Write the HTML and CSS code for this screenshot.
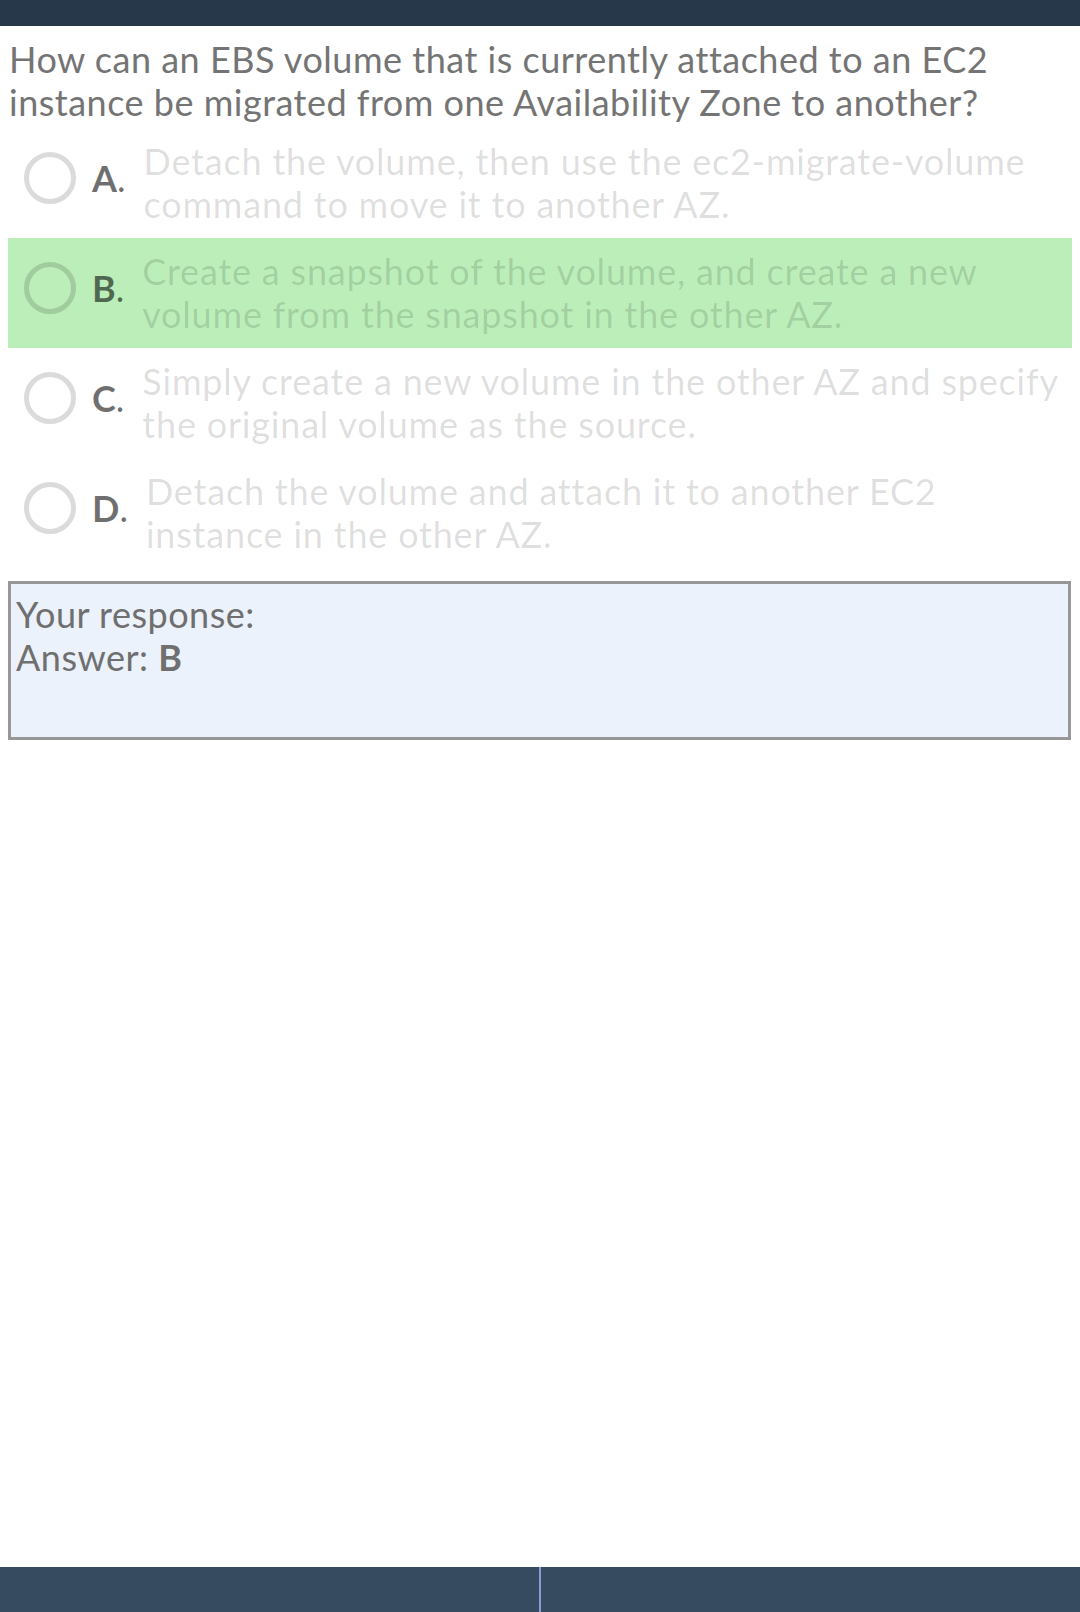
FILE: index.html
```html
<!DOCTYPE html>
<html lang="en">
<head>
<meta charset="utf-8">
<title>Quiz</title>
<link rel="stylesheet" href="styles.css">
</head>
<body>
<div class="page">
  <header class="topbar"></header>
  <main class="content">
    <p class="question">How can an EBS volume that is currently attached to an EC2 instance be migrated from one Availability Zone to another?</p>
    <div class="options">
      <div class="option">
        <div class="marker"><span class="radio"></span><span class="label"><b>A</b>.</span></div>
        <div class="text">Detach the volume, then use the ec2-migrate-volume command to move it to another AZ.</div>
      </div>
      <div class="option correct">
        <div class="marker"><span class="radio"></span><span class="label"><b>B</b>.</span></div>
        <div class="text">Create a snapshot of the volume, and create a new volume from the snapshot in the other AZ.</div>
      </div>
      <div class="option">
        <div class="marker"><span class="radio"></span><span class="label"><b>C</b>.</span></div>
        <div class="text">Simply create a new volume in the other AZ and specify the original volume as the source.</div>
      </div>
      <div class="option">
        <div class="marker"><span class="radio"></span><span class="label"><b>D</b>.</span></div>
        <div class="text">Detach the volume and attach it to another EC2 instance in the other AZ.</div>
      </div>
    </div>
    <div class="response">
      <div>Your response:</div>
      <div>Answer: <b>B</b></div>
    </div>
  </main>
  <footer class="bottombar">
    <div class="half"></div>
    <div class="divider"></div>
    <div class="half"></div>
  </footer>
</div>
</body>
</html>
```
FILE: styles.css
```css
html, body {
  margin: 0;
  padding: 0;
  background: #ffffff;
}
body {
  font-family: Lato, "Noto Sans", sans-serif;
}
.page {
  display: flex;
  flex-direction: column;
  min-height: 100vh;
}
.topbar {
  height: 26px;
  background: #27384a;
  flex: none;
}
.content {
  padding: 12px 8px 0 8px;
  flex: 1;
}
.question {
  margin: 0 0 4px 0;
  padding-left: 1px;
  font-size: 36px;
  font-weight: 400;
  letter-spacing: 0.5px;
  line-height: 43px;
  color: #747474;
}
.options {
  display: flex;
  flex-direction: column;
}
.option {
  display: flex;
  align-items: center;
  padding: 12px 0;
}
.option.correct {
  background: #bbeeb9;
}
.marker {
  display: flex;
  align-items: center;
  margin-bottom: 10px;
  flex: none;
}
.radio {
  width: 52px;
  height: 52px;
  box-sizing: border-box;
  border: 5px solid rgba(0, 0, 0, 0.14);
  border-radius: 50%;
  margin-left: 16px;
}
.label {
  margin-left: 16px;
  font-size: 36px;
  line-height: 43px;
  color: rgba(0, 0, 0, 0.56);
}
.label b {
  font-weight: 700;
}
.text {
  margin-left: 18px;
  font-size: 36px;
  font-weight: 400;
  letter-spacing: 0.8px;
  line-height: 43px;
  color: rgba(0, 0, 0, 0.135);
}
.response {
  margin-top: 13px;
  height: 159px;
  box-sizing: border-box;
  border: 3px solid #979797;
  background: #ebf2fb;
  padding: 9px 5px;
  font-size: 36px;
  font-weight: 400;
  letter-spacing: 0.5px;
  line-height: 43px;
  color: #6f6f6f;
  margin-right: 1px;
}
.response b {
  font-weight: 700;
  letter-spacing: 0;
}
.bottombar {
  flex: none;
  height: 45px;
  display: flex;
  background: #364b5f;
}
.half {
  flex: 1;
}
.divider {
  width: 2px;
  background: #8e9dd0;
}
```
